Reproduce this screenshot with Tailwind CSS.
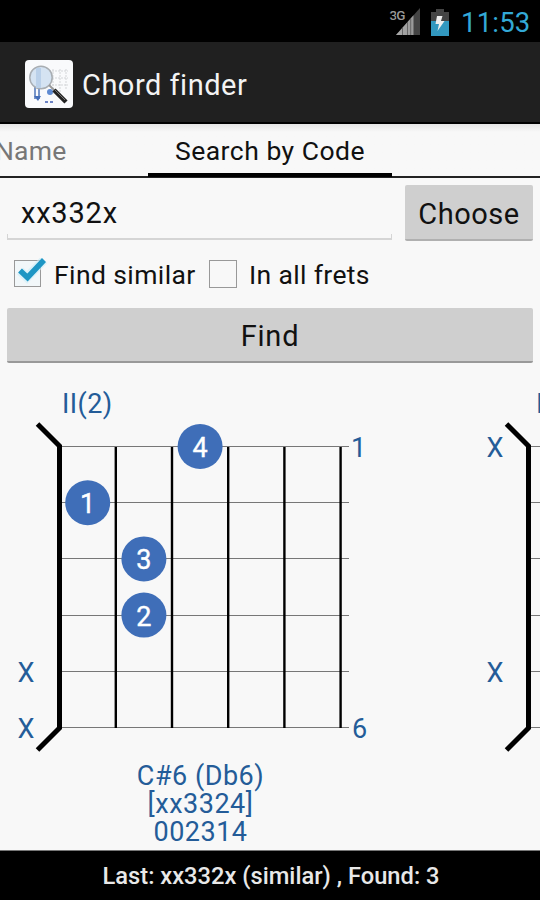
<!DOCTYPE html>
<html lang="en">

<head>
  <meta charset="UTF-8" />
  <meta name="viewport" content="width=device-width, initial-scale=1.0" />
  <title>Chord finder</title>

  <!-- Tailwind CSS CDN -->
  <script src="https://cdn.jsdelivr.net/npm/@tailwindcss/browser@4"></script>
</head>

<body class="w-[540px] h-[900px] overflow-hidden flex flex-col bg-[#f8f8f8] text-[#111] font-[Roboto,sans-serif] whitespace-nowrap">

  <!-- Status bar -->
  <div class="h-[42px] shrink-0 bg-black flex items-center justify-end pr-[11px] text-[#33a9d6]">
    <svg class="w-8 h-[34px]" viewBox="0 0 32 34">
      <defs>
        <linearGradient id="signal" x1="0" x2="1">
          <stop offset="0" stop-color="#aaa" />
          <stop offset="1" stop-color="#999" />
        </linearGradient>
      </defs>
      <path d="M8 31L32 4V31Z" fill="#444" />
      <path d="M8 31L25.500 11.300V31Z" fill="url(#signal)" />
      <path d="M14.500 24V31M19.500 18V31M22.700 15V31" stroke="#666" stroke-width="1" />
      <text x="1.500" y="15.500" font-size="13.500" font-weight="500" fill="#999" stroke="#000" stroke-width="2" paint-order="stroke" textLength="16">3G</text>
    </svg>
    <svg class="w-[18px] h-[27px] ml-[11px] mt-[2px]" viewBox="0 0 18 27">
      <path d="M5 0H13V3H18V27H0V3H5Z" fill="#444" />
      <path d="M0 12H18V27H0Z" fill="#3298bf" />
      <path d="M6 7H11.500L10 12H13.500L6.500 22L8 15H4.500Z" fill="#eee" />
    </svg>
    <span class="ml-[12px] w-[68px] text-[27.500px] leading-[44px] tracking-[0.2px] pt-[4px]">11:53</span>
  </div>

  <!-- Title bar -->
  <header class="h-[82px] shrink-0 bg-[#202020] border-b-2 border-black flex items-center pt-[3px] pl-[25px] gap-[9px]">
    <svg class="w-12 h-12" viewBox="0 0 48 48">
      <rect width="48" height="48" rx="4" fill="#f9fafc" />
      <path d="M24 11H43M24 18H43M24 25H43M28 9V34M35 9V34M41 9V30" stroke="#d3d5d8" stroke-width="1" stroke-dasharray="2 1" />
      <path d="M10 27V39M14 27V39" stroke="#7895c9" stroke-width="2" />
      <path d="M9 36H16L13 41Z" fill="#456eb8" />
      <circle cx="25" cy="32" r="3" fill="#5f8bd2" />
      <path d="M20 42H23M25 42H28" stroke="#6c83c5" stroke-width="2" />
      <circle cx="16" cy="17.500" r="11.200" fill="#d5e3f2" stroke="#a8adb2" stroke-width="1.500" />
      <path d="M11 8H16V28H11Z" fill="#bad0e9" />
      <path d="M24 25L30 31" stroke="#999" stroke-width="2" />
      <path d="M29 30L41 42" stroke="#222" stroke-width="4.500" />
      <path d="M30 30L40 40" stroke="#777" stroke-width="1" />
    </svg>
    <h1 class="pt-[2px] text-[29px] leading-[34px] tracking-[0.5px] text-[#f3f3f3]">Chord finder</h1>
  </header>

  <!-- Tabs -->
  <nav class="h-[54px] shrink-0 flex items-stretch border-b-2 border-[#222] text-[26.500px] leading-[54px] bg-linear-to-b from-[#e4e4e4] to-[#f8f8f8] to-15%">
    <span class="w-[148px] -indent-[5px] tracking-[0.2px] text-[#777]">Name</span>
    <span class="w-[244px] h-[53px] text-center tracking-[0.5px] border-b-4 border-black">Search by Code</span>
  </nav>

  <!-- Search form -->
  <main class="h-[202px] shrink-0 pt-[7px] px-[7px]">
    <div class="flex justify-between">
      <div class="w-[385px] h-[55px] flex flex-col justify-end">
        <span class="pl-[14px] text-[29px] leading-[42px] tracking-[0.8px]">xx332x</span>
        <div class="h-[6px] border-x border-b-2 border-[#d5d5d5]"></div>
      </div>
      <button class="w-[128px] h-[56px] rounded-[2px] bg-[#cfcfcf] border-b-2 border-[#b0b0b0] pt-[5px] text-[29px] tracking-[0.5px]">Choose</button>
    </div>

    <div class="flex items-center h-[67px] pl-[7px] text-[26.500px]">
      <svg class="w-[33px] h-[30px] -mt-[4px]" viewBox="0 0 33 30">
        <rect x=".5" y="2.500" width="26" height="26" fill="#f2f7f9" stroke="#999" />
        <path d="M6 13L13 19.500L30 2" fill="none" stroke="#c9edf8" stroke-width="9" opacity=".6" />
        <path d="M6 12.500L13.500 19.500L30 2" fill="none" stroke="#1e96c4" stroke-width="5.500" />
      </svg>
      <span class="w-[162px] pl-[7px] tracking-[0.4px]">Find similar</span>
      <span class="w-7 h-7 -mt-[2px] border border-[#999]"></span>
      <span class="pl-[12px] tracking-[0.35px]">In all frets</span>
    </div>

    <button class="w-full h-[55px] rounded-[2px] bg-[#cfcfcf] border-b-2 border-[#999] pt-[4px] text-[29px] tracking-[0.8px]">Find</button>
  </main>

  <!-- Chord diagrams, scrolled sideways -->
  <section id="chords" class="h-[470px] shrink-0 flex overflow-hidden"></section>

  <!-- Footer -->
  <footer class="h-[50px] shrink-0 bg-black border-t border-[#777] text-center text-[#e8e8e8] text-[23.700px] font-medium leading-[51px] pl-[2px]">Last: xx332x (similar) , Found: 3</footer>

  <script>
    const chords = [
      {
        fret: "II(2)", fretX: 62, muted: [5, 6], caption: ["C#6 (Db6)", "[xx3324]", "002314"],
        fingers: [{ n: 4, string: 1, pos: 3 }, { n: 1, string: 2, pos: 1 }, { n: 3, string: 3, pos: 2 }, { n: 2, string: 4, pos: 2 }]
      },
      { fret: "I(1)", fretX: 67, muted: [1, 5], caption: [], fingers: [] }
    ];

    const STEP = 56.2;
    const TOP = 66.5;

    function drawChord(chord) {
      let svg = `<svg class="w-[469px] h-[470px] shrink-0" viewBox="0 0 469 470" font-size="27" fill="#245c98">`;
      svg += `<text x="${chord.fretX}" y="33" letter-spacing=".4">${chord.fret}</text>`;

      // strings
      for (let i = 0; i < 6; i++) {
        const y = Math.floor(TOP + i * STEP) + 0.5;
        svg += `<path d="M60 ${y}H349" stroke="#777" />`;
      }
      // frets
      for (let i = 1; i < 6; i++) {
        const x = 59.6 + i * STEP;
        svg += `<path d="M${x} 67V348" stroke="#000" stroke-width="2.400" />`;
      }
      // nut
      svg += `<path d="M37.500 44L59.500 66V348L37.500 370" fill="none" stroke="#000" stroke-width="5" />`;

      chord.muted.forEach((s) => {
        svg += `<text x="26" y="${77 + (s - 1) * STEP}" text-anchor="middle">X</text>`;
      });
      svg += `<text x="351" y="77">1</text><text x="352" y="358">6</text>`;

      chord.fingers.forEach((f) => {
        const x = 31.5 + f.pos * STEP;
        const y = TOP + (f.string - 1) * STEP;
        svg += `<circle cx="${x}" cy="${y}" r="22.500" fill="#3f6eb8" />`;
        svg += `<text x="${x}" y="${y + 10.5}" fill="#fff" stroke="#fff" stroke-width=".4" text-anchor="middle">${f.n}</text>`;
      });
      chord.caption.forEach((line, i) => {
        svg += `<text x="200.500" y="${404.5 + i * 28}" letter-spacing=".5" text-anchor="middle">${line}</text>`;
      });
      return svg + "</svg>";
    }

    document.getElementById("chords").innerHTML = chords.map(drawChord).join("");
  </script>
</body>

</html>
